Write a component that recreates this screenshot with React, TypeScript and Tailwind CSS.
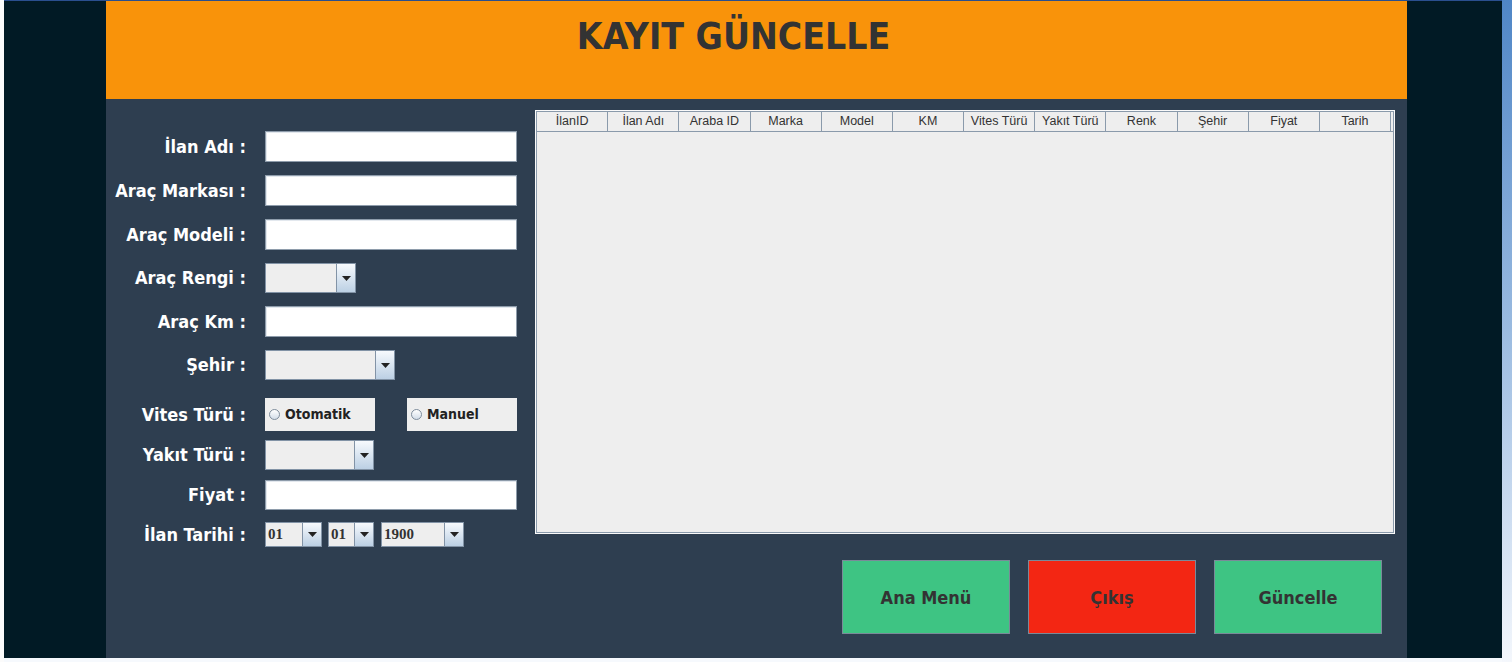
import React from "react";

const tahoma = "font-['DejaVu_Sans_Condensed','DejaVu_Sans',sans-serif]";

function Label({ children }: { children: React.ReactNode }) {
  return (
    <div className={`w-[140px] shrink-0 text-right text-[18px] font-bold leading-none text-white ${tahoma}`}>
      {children}
    </div>
  );
}

function TextInput() {
  return (
    <div className="h-full w-[252px] border border-[#8e9cab] bg-white shadow-[inset_1px_1px_0_#e3e8ee]" />
  );
}

function Arrow() {
  return (
    <svg width="9" height="5" viewBox="0 0 9 5">
      <path d="M0 0 H9 L4.5 5 Z" fill="#222" />
    </svg>
  );
}

function Combo({ width, text, textClass }: { width: number; text?: string; textClass?: string }) {
  return (
    <div className="flex h-full border border-[#8293a6] bg-[#eeeeee]" style={{ width }}>
      <div className={`flex flex-1 items-center pl-[2px] ${textClass ?? ""}`}>{text}</div>
      <div className="flex w-[19px] items-center justify-center border-l border-[#8293a6] bg-gradient-to-b from-[#f7fafd] to-[#bcd0e4]">
        <Arrow />
      </div>
    </div>
  );
}

function Radio({ label }: { label: string }) {
  return (
    <div className={`flex h-full w-[110px] items-center bg-[#eeeeee] pl-[4px] ${tahoma}`}>
      <span className="mr-[5px] inline-block h-[11px] w-[11px] rounded-full border border-[#7e8d9c] bg-gradient-to-b from-[#ffffff] to-[#d3dde8]" />
      <span className="text-[14px] font-bold text-[#222]">{label}</span>
    </div>
  );
}

function Row({ h, mt, label, children }: { h: number; mt: number; label: string; children: React.ReactNode }) {
  return (
    <div className="flex items-center" style={{ height: h, marginTop: mt }}>
      <Label>{label}</Label>
      <div className="ml-[19px] flex h-full items-center">{children}</div>
    </div>
  );
}

const cols = ["İlanID", "İlan Adı", "Araba ID", "Marka", "Model", "KM", "Vites Türü", "Yakıt Türü", "Renk", "Şehir", "Fiyat", "Tarih"];

function Btn({ label, color }: { label: string; color: string }) {
  return (
    <div className={`flex h-[74px] w-[168px] items-center justify-center border border-[#7a8a99] ${color} text-[18px] font-bold text-[#333] ${tahoma}`}>
      {label}
    </div>
  );
}

export default function App() {
  return (
    <div className="relative flex h-[662px] w-[1512px] overflow-hidden bg-[#f6f9fd]">
      <div className="h-[662px] w-[4px] bg-[#fbfbfb]" />
      <div className="flex w-[1498px] flex-col">
        <div className="h-[1px] bg-[#2a4f8f]" />
        <div className="flex h-[657px] bg-[#011a25] pl-[102px]">
          <div className="flex w-[1301px] flex-col">
            <div className="flex h-[98px] justify-center bg-[#f9930a] pr-[46px] pt-[17px]">
              <div className={`text-[37px] font-bold leading-none text-[#333333] ${tahoma}`}>KAYIT GÜNCELLE</div>
            </div>
            <div className="flex flex-1 bg-[#2e3e50]">
              <div className="flex w-[429px] flex-col pt-[32px]">
                <Row h={31} mt={0} label="İlan Adı :"><TextInput /></Row>
                <Row h={31} mt={13} label="Araç Markası :"><TextInput /></Row>
                <Row h={31} mt={13} label="Araç Modeli :"><TextInput /></Row>
                <Row h={30} mt={13} label="Araç Rengi :"><Combo width={91} /></Row>
                <Row h={31} mt={13} label="Araç Km :"><TextInput /></Row>
                <Row h={30} mt={13} label="Şehir :"><Combo width={130} /></Row>
                <Row h={33} mt={18} label="Vites Türü :">
                  <div className="flex h-full gap-[32px]">
                    <Radio label="Otomatik" />
                    <Radio label="Manuel" />
                  </div>
                </Row>
                <Row h={30} mt={9} label="Yakıt Türü :"><Combo width={109} /></Row>
                <Row h={30} mt={10} label="Fiyat :"><TextInput /></Row>
                <Row h={25} mt={12} label="İlan Tarihi :">
                  <div className="flex h-full gap-[6px]">
                    <Combo width={57} text="01" textClass="font-['Liberation_Serif',serif] text-[15px] font-bold text-[#333]" />
                    <Combo width={46} text="01" textClass="font-['Liberation_Serif',serif] text-[15px] font-bold text-[#333]" />
                    <div className="ml-[1px]">
                      <Combo width={83} text="1900" textClass="font-['Liberation_Serif',serif] text-[15px] font-bold text-[#333]" />
                    </div>
                  </div>
                </Row>
              </div>
              <div className="flex w-[860px] flex-col pt-[11px]">
                <div className="flex h-[424px] flex-col border border-[#fafafa] bg-[#eeeeee]">
                  <div className="flex flex-1 flex-col border border-[#8a9aab] bg-[#eeeeee]">
                    <div className="flex h-[20px] border-b border-[#8a9aab] pr-[2px]">
                      {cols.map((c) => (
                        <div
                          key={c}
                          className="flex flex-1 items-center justify-center border-r border-[#8a9aab] bg-[#eeeeee] font-['Liberation_Sans',Arial,sans-serif] text-[12.5px] text-[#333]"
                        >
                          {c}
                        </div>
                      ))}
                    </div>
                    <div className="flex-1" />
                  </div>
                </div>
                <div className="mt-[26px] flex justify-end gap-[18px] pr-[13px]">
                  <Btn label="Ana Menü" color="bg-[#3ec483]" />
                  <Btn label="Çıkış" color="bg-[#f32613]" />
                  <Btn label="Güncelle" color="bg-[#3ec483]" />
                </div>
              </div>
            </div>
          </div>
        </div>
        <div className="h-[4px] bg-[#f6f9fd]" />
      </div>
      <div className="h-[662px] w-[10px] bg-gradient-to-b from-[#4f86c6] via-[#9bbbe0] to-[#f4f7fc]" />
    </div>
  );
}
